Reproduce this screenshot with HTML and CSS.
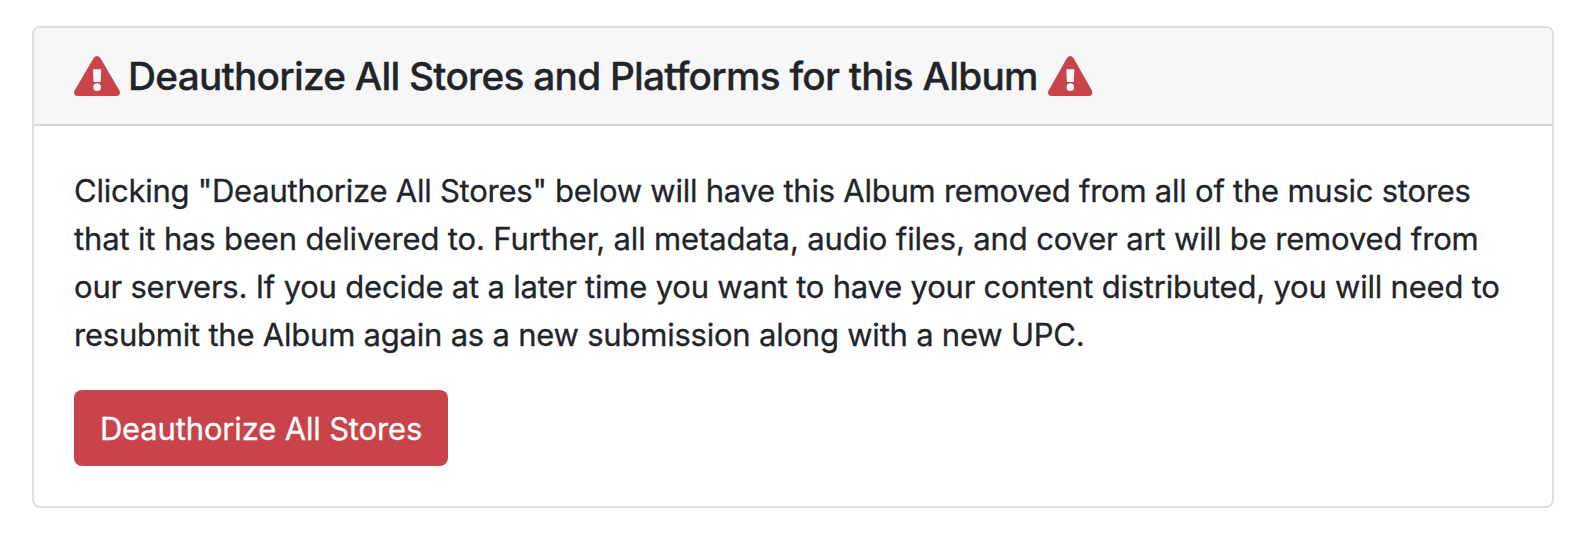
FILE: index.html
```html
<!DOCTYPE html>
<html lang="en">
<head>
<meta charset="utf-8">
<title>Deauthorize Album</title>
<link rel="stylesheet" href="styles.css">
</head>
<body>
<svg class="defs" width="0" height="0"><symbol id="warn" viewBox="0 0 46 40" preserveAspectRatio="none"><path fill-rule="evenodd" d="M19.8 1.8Q23 -1.8 26.2 1.8L45.4 34.5C47 37.4 45.2 40 42.2 40H3.8C.8 40 -1 37.4 .6 34.5ZM19.4 13.2H26.8Q27.2 13.2 27.2 13.7L26.7 25.5Q26.7 26.1 26.1 26.1H20.1Q19.5 26.1 19.5 25.5L19 13.7Q19 13.2 19.4 13.2ZM23.1 27.3A3.85 3.85 0 1 0 23.1 35A3.85 3.85 0 1 0 23.1 27.3Z"/></symbol></svg>
<section class="card">
<header class="card-header">
<svg class="icon"><use href="#warn"/></svg>
<h1 class="title">Deauthorize All Stores and Platforms for this Album</h1>
<svg class="icon icon-end"><use href="#warn"/></svg>
</header>
<div class="card-body">
<p class="text"><span class="line l1">Clicking "Deauthorize All Stores" below will have this Album removed from all of the music stores</span> <span class="line l2">that it has been delivered to. Further, all metadata, audio files, and cover art will be removed from</span> <span class="line l3">our servers. If you decide at a later time you want to have your content distributed, you will need to</span> <span class="line l4">resubmit the Album again as a new submission along with a new UPC.</span></p>
<button class="button" type="button">Deauthorize All Stores</button>
</div>
</section>
</body>
</html>
```
FILE: styles.css
```css
* { box-sizing: border-box; }
body { margin: 0; padding: 26px 24px 26px 32px; background: #fff; color: #212529; font-family: Inter, sans-serif; }
.defs { display: none; }
.card { width: 1522px; height: 482px; border: 2px solid #dfdfdf; border-radius: 8px; overflow: hidden; }
.card-header { display: flex; align-items: center; height: 98px; padding: 0 40px; background: #f7f7f7; border-bottom: 2px solid #d8d8d8; }
.icon { width: 46px; height: 40px; fill: #c9444a; flex: none; }
.icon-end { width: 44.5px; }
.title { width: 928px; margin: 0; padding-left: 8px; font-size: 38.8px; font-weight: 500; line-height: 48px; letter-spacing: -0.77px; white-space: nowrap; -webkit-text-stroke: 0.3px currentColor; }
.card-body { padding: 40px; }
.text { margin: 0 0 32px; padding-top: 1px; height: 192px; font-size: 31px; line-height: 48px; white-space: nowrap; -webkit-text-stroke: 0.3px currentColor; }
.line { display: block; }
.l1 { letter-spacing: -0.24px; }
.l2 { letter-spacing: -0.154px; }
.l3 { letter-spacing: -0.21px; }
.l4 { letter-spacing: -0.22px; }
.button { display: block; width: 374px; height: 76px; padding: 2px 0 0; border: 0; border-radius: 8px; background: #c9444a; color: #fff; font: 400 31px/48px Inter, sans-serif; letter-spacing: -0.16px; white-space: nowrap; -webkit-text-stroke: 0.3px currentColor; }
```
